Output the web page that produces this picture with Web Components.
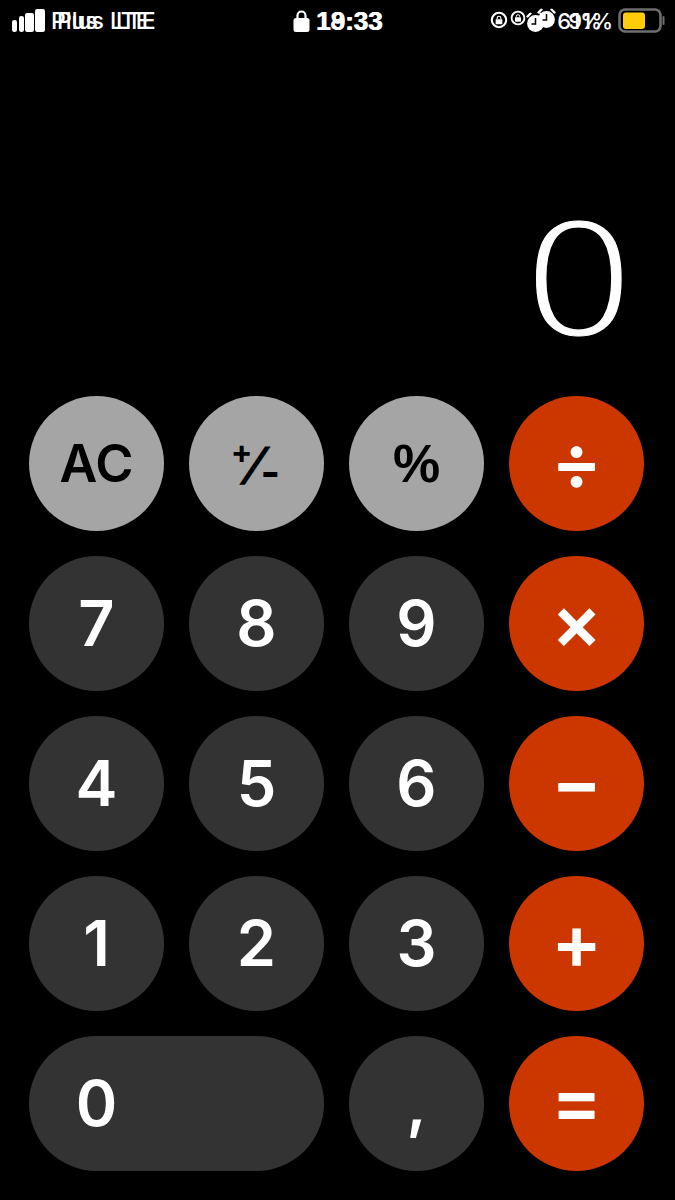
<!DOCTYPE html>
<html lang="en">
<head>
<meta charset="utf-8">
<title>Calculator</title>
<style>
html,body{margin:0;background:#000;}
body{width:675px;height:1200px;overflow:hidden;font-family:Inter,"Liberation Sans",sans-serif;}
.pm{display:inline-block;font-family:Inter,sans-serif;font-weight:700;line-height:1}
</style>
</head>
<body>
<calc-app>
  <status-bar slot="status"></status-bar>
  <calc-display slot="display">0</calc-display>
  <calc-pad slot="pad">
    <calc-key kind="fn" style="--fs:52px;--ff:Inter;--fw:600">AC</calc-key>
    <calc-key kind="fn" style="--fs:52px;--ff:Inter;--fw:500"><span class="pm" style="font-size:32px;transform:translate(-7px,-12px)">+</span><span class="pm" style="font-weight:700;font-size:44px;margin:0 -9px 0 -12px;transform:skewX(-22deg)">/</span><span class="pm" style="font-size:42px;transform:translate(5px,8px)">-</span></calc-key>
    <calc-key kind="fn" style="--fs:53px">%</calc-key>
    <calc-key kind="op" style="--pb:5px">÷</calc-key>
    <calc-key>7</calc-key><calc-key>8</calc-key><calc-key>9</calc-key>
    <calc-key kind="op" style="--pb:6px">×</calc-key>
    <calc-key>4</calc-key><calc-key>5</calc-key><calc-key>6</calc-key>
    <calc-key kind="op" style="--pb:6px">−</calc-key>
    <calc-key>1</calc-key><calc-key>2</calc-key><calc-key>3</calc-key>
    <calc-key kind="op" style="--pb:5px">+</calc-key>
    <calc-key wide>0</calc-key>
    <calc-key>,</calc-key>
    <calc-key kind="op" style="--pb:7px">=</calc-key>
  </calc-pad>
</calc-app>
<script>
function def(name, html){
  customElements.define(name, class extends HTMLElement{
    constructor(){super();this.attachShadow({mode:'open'}).innerHTML=html;}
  });
}
def('calc-app',`<style>
:host{display:flex;flex-direction:column;width:675px;height:1200px;background:#000;color:#fff;}
.d{height:354px;display:block}
.p{padding:0 31px 0 29px}
</style><slot name="status"></slot><div class="d"><slot name="display"></slot></div><div class="p"><slot name="pad"></slot></div>`);

const sig=`<svg width="36" height="26" viewBox="0 0 36 26"><g fill="#fff"><rect x="0" y="12" width="5" height="12" rx="2.2"/><rect x="7" y="8" width="5" height="16" rx="2.2"/><rect x="13" y="5" width="9" height="19" rx="2.2"/><rect x="23" y="1" width="10" height="23" rx="2.2"/></g></svg>`;
const lock=`<svg width="17" height="24" viewBox="0 0 17 24"><path d="M4.5 10V6.5a4 4 0 0 1 8 0V10" fill="none" stroke="#fff" stroke-width="2.2"/><rect x="0.5" y="9" width="16" height="14" rx="2.5" fill="#fff"/></svg>`;
const rot=(s,dy)=>`<svg style="transform:translateY(${dy}px)" width="${s}" height="${s}" viewBox="0 0 24 24"><circle cx="12" cy="12" r="9.6" fill="none" stroke="#fff" stroke-width="2.8"/><rect x="7.5" y="11" width="9" height="6.5" rx="1" fill="#fff"/><path d="M9.5 11V9.5a2.5 2.5 0 0 1 5 0V11" fill="none" stroke="#fff" stroke-width="1.5"/></svg>`;
const alarm=(dy)=>`<svg style="transform:translateY(${dy}px)" width="19" height="20" viewBox="0 0 19 20"><circle cx="9.5" cy="11" r="8.4" fill="#fff"/><path d="M9.5 5.5V11.5H5.5" fill="none" stroke="#000" stroke-width="1.5"/><path d="M1.5 4l3-3M17.5 4l-3-3" stroke="#fff" stroke-width="2.4" stroke-linecap="round"/></svg>`;
const batt=`<svg width="47" height="26" viewBox="0 0 47 26"><rect x="1.5" y="1.5" width="41" height="22" rx="5.5" fill="none" stroke="#6e6e6e" stroke-width="2.6"/><rect x="5" y="4.5" width="22" height="16.5" rx="3" fill="#ffcc0a"/><rect x="44.5" y="8" width="2" height="9" rx="1" fill="#6e6e6e"/></svg>`;

def('status-bar',`<style>
:host{display:grid;height:42px;font:500 23px Inter,"Liberation Sans",sans-serif;color:#fff;}
.l{grid-area:1/1;display:grid;grid-template-columns:1fr auto 1fr;align-items:center;height:42px;}
.g{display:flex;align-items:center}
.r{justify-content:flex-end}
.o{word-spacing:6px;white-space:nowrap}
.t{font:700 26px "Liberation Sans",Arial,sans-serif;margin-left:6px}
.p{font-size:22px}
svg{display:block;flex:none}
</style>
<div class="l"><div class="g" style="padding-left:12px">${sig}<span class="o" style="margin-left:3px">Plus LTE</span></div>
<div class="g">${lock}<span class="t">18:33</span></div>
<div class="g r" style="padding-right:10px">${rot(18,-1)}<span style="width:18px"></span>${alarm(1.5)}<span style="width:12px"></span><span class="p">61%</span><span style="width:16px"></span>${batt}</div></div>
<div class="l"><div class="g" style="padding-left:57px"><span class="o">Plus LTE</span></div>
<div class="g"><span style="width:17px"></span><span class="t" style="transform:translateX(1px)">19:33</span></div>
<div class="g r" style="padding-right:62px">${rot(16,-3)}<span style="width:11px"></span>${alarm(-2.5)}<span style="width:12px"></span><span class="p">91%</span></div></div>`);

def('calc-display',`<style>
:host{display:block;height:100%;}
div{font:200 151px/1 "DejaVu Sans",Inter,sans-serif;text-align:right;padding:165px 37px 0 0;color:#fff;-webkit-text-stroke:1px #fff}
span{display:inline-block;transform:scaleX(1.23);transform-origin:100% 50%}
</style><div><span><slot></slot></span></div>`);

def('calc-pad',`<style>
:host{display:grid;grid-template-columns:repeat(4,135px);grid-auto-rows:135px;gap:25px;}
</style><slot></slot>`);

def('calc-key',`<style>
:host{display:block;border-radius:68px;background:#333;color:#fff;overflow:hidden}
:host([wide]){grid-column:span 2}
:host([kind=fn]){background:#a5a5a5;color:#000}
:host([kind=op]){background:#cc3700}
.b{width:135px;height:135px;box-sizing:border-box;display:flex;align-items:center;justify-content:center;font:600 63px/1 Inter,"Liberation Sans",sans-serif}
:host([kind=fn]) .b{font:var(--fw,700) var(--fs,53px)/1 var(--ff,"Liberation Sans"),Arial,sans-serif}
:host([kind=op]) .b{font-size:76px;padding:var(--pt,0) 0 var(--pb,0)}
</style><div class="b"><slot></slot></div>`);
</script>
</body>
</html>
